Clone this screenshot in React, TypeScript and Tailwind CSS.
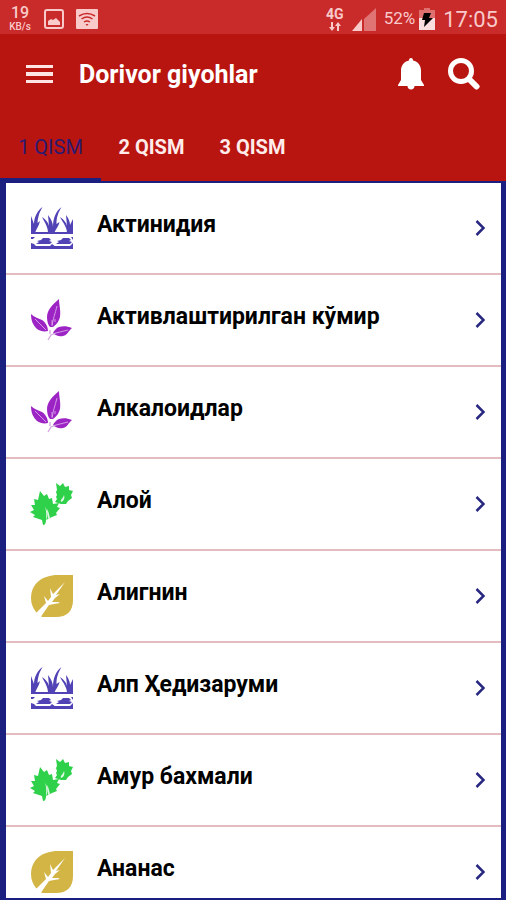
import { useState } from 'react';

type IconName = 'grass' | 'sprig' | 'maple' | 'leaf';

interface Herb {
  id: number;
  name: string;
  icon: IconName;
}

const tabs = ['1 QISM', '2 QISM', '3 QISM'];

const herbs: Herb[] = [
  { id: 1, name: 'Актинидия', icon: 'grass' },
  { id: 2, name: 'Активлаштирилган кўмир', icon: 'sprig' },
  { id: 3, name: 'Алкалоидлар', icon: 'sprig' },
  { id: 4, name: 'Алой', icon: 'maple' },
  { id: 5, name: 'Алигнин', icon: 'leaf' },
  { id: 6, name: 'Алп Ҳедизаруми', icon: 'grass' },
  { id: 7, name: 'Амур бахмали', icon: 'maple' },
  { id: 8, name: 'Ананас', icon: 'leaf' },
];

function GrassIcon() {
  return (
    <svg viewBox="0 0 44 44" className="size-11" fill="#5143b5">
      {/* blades */}
      <path d="M1 27V10l3 8c0-7 4-14 8.500-17C9 7 8 11 7.500 17L10 15c-1 5-4 8-5 12z" />
      <path d="M18 27c0-6-3-10-6-16 4 3 6 5 7 9l-1-11c3 4 5 8 5 12C23 12 26 5 31.500 1c-4 7-5 11-5 17l3-2c-1 5-4 7-5 11z" />
      <path d="M37 27c0-6-4-10-7-16 4 3 6 5 7 9l-1-11c3 4 4 7 4 10l3-6v14z" />
      {/* soil */}
      <path d="M1 26h42v2H1zM1 40h42v3H1z" />
      <path d="M6 38l3-2-2-1 4-1 2-2h6l2 2-2 1 3 1-2 2zM26 38l3-2-2-1 4-1 2-2h6l2 2-2 1 3 1-2 2z" />
      <path d="M1 31h4l-2 2H1zM1 37l3 1 3 3H1zM22 38l4 3h-7zM41 31h2v3zM43 37v4h-4z" />
    </svg>
  );
}

function SprigIcon() {
  return (
    <svg viewBox="0 0 44 44" className="size-11" fill="#9d24c4">
      <path d="M29 1C23 6 17 12 17 19c0 4 1 8 3 10h3c4-3 6-6 7-10 1-7-1-12-1-18z" />
      <path d="M1 16c0 7 2 11 6 15 3 2 7 3 11 2 0-5-3-9-6-11-4-2-8-3-11-6z" />
      <path d="M42 30c-5-2-9-2-13-1-3 1-5 4-6 6 2 2 6 4 10 3 5-1 5-5 9-8z" />
      <path d="M18 42l3-5 5-2M20 32v4" stroke="#d3a6e2" strokeWidth="1.300" fill="none" />
      <path d="M27 8c-2 8-4 13-5 20M5 21l11 11M38 32l-12 3M22 22v5M25 21v3" stroke="#d9a5ea" strokeWidth="0.900" fill="none" />
    </svg>
  );
}

function MapleIcon() {
  return (
    <svg viewBox="0 0 44 44" className="size-11">
      <g fill="#2fd04a">
        <path d="M10 9l4 5 3-2 2 5 3-1 1 6 6-1-2 4 3 1-4 5 1 2-5 2-4 2-2 1c0 3-1 5-3 5l-1-5-9-3 2-2-5-3 4-2-3-5 4 0-1-6 4 1z" />
        <path d="M26 1l4 3 3-3 2 4 4-1v4l4 1-2 4 1 3-4 3-2 3-5 0-6-2 2-3-1-2 1-2-1-3 1-2z" />
      </g>
      <path d="M15 25c3 4 3 8 1 14 0-5 1-8-1-14zM17 27c2 3 2 6 3 9l-2 1zM34 13c1 3 0 6-3 7-1-3 2-3 3-7z" fill="#dff8e2" />
    </svg>
  );
}

function LeafIcon() {
  return (
    <svg viewBox="0 0 44 44" className="size-11">
      <path d="M43 1v25c0 11-6 17-17 17H12L6 38C3 34 1 30 1 24 1 10 12 1 28 1z" fill="#d3b546" />
      <path
        d="M35 8l-9 13 4-1-5 4-3 4 6 0 2 1-6 1-5 1L10 44l-5-4 11-11-2-7 4 5 3-4-1-9 3 6z"
        fill="#fff"
      />
    </svg>
  );
}

const herbIcons = {
  grass: GrassIcon,
  sprig: SprigIcon,
  maple: MapleIcon,
  leaf: LeafIcon,
};

function StatusBar() {
  return (
    <div className="flex h-[34px] shrink-0 items-center justify-between bg-[#c92a2a] px-2 pt-1 text-[#f8caca]">
      <div className="flex items-center gap-3">
        <div className="flex w-6 flex-col items-center font-medium">
          <span className="text-[16px] leading-4">19</span>
          <span className="text-[10px] leading-3">KB/s</span>
        </div>
        <svg viewBox="0 0 20 20" className="size-5">
          <rect x="1" y="1" width="18" height="18" rx="2" fill="none" stroke="currentColor" strokeWidth="2" />
          <path d="M4 16v-4l3-2 2 1 3-2 4 4v3z" fill="currentColor" />
        </svg>
        <svg viewBox="0 0 22 20" className="h-5 w-[22px]">
          <rect width="22" height="20" rx="1" fill="currentColor" />
          <path d="M3 7q8-5 16 0M5.500 10q5.500-4 11 0M8 13q3-2 6 0" fill="none" stroke="#c92a2a" strokeWidth="1.500" />
          <path d="M9.500 15h3L11 17z" fill="#c92a2a" />
        </svg>
      </div>
      <div className="flex items-center">
        <div className="mr-2 flex flex-col items-center">
          <span className="text-[14px] font-bold leading-4">4G</span>
          <svg viewBox="0 0 14 10" className="h-[10px] w-[14px]" fill="currentColor">
            <path d="M3 0h2v5h2L4 9 1 5h2zM9 9h2V4h2l-3-4-3 4h2z" />
          </svg>
        </div>
        <svg viewBox="0 0 24 23" className="mr-2 h-[23px] w-6">
          <path d="M0 23L10 11v12z" fill="currentColor" />
          <path d="M12 23V11L24 0v23z" fill="#e07373" />
        </svg>
        <span className="mr-1 text-[17px]">52%</span>
        <svg viewBox="0 0 16 22" className="mr-2 h-[22px] w-4">
          <path d="M5 0h6v2h5v9H0V2h5z" fill="#df7070" />
          <path d="M0 10h16v12H0z" fill="#fbdede" />
          <path d="M5 5h7l-2 5h4L5 19l1-7H3z" fill="#000" />
        </svg>
        <span className="text-[22px]">17:05</span>
      </div>
    </div>
  );
}

export default function App() {
  const [activeTab, setActiveTab] = useState(0);

  return (
    <div className="flex h-screen flex-col bg-[#b91510] font-['Roboto',sans-serif]">
      <StatusBar />

      <header className="flex h-20 shrink-0 items-center px-[26px] text-white">
        <button aria-label="Menu" className="mr-[26px]">
          <svg viewBox="0 0 27 20" className="h-5 w-[27px]" fill="#ffe4e4">
            <path d="M0 1h27v3H0zM0 8h27v4H0zM0 16h27v3H0z" />
          </svg>
        </button>
        <h1 className="flex-1 pt-[2px] text-[25px] font-bold leading-8">Dorivor giyohlar</h1>
        <button aria-label="Notifications" className="mr-6">
          <svg viewBox="0 0 26 33" className="h-[33px] w-[26px]" fill="currentColor">
            <path d="M13 0c1.500 0 2 1 2 2.500 5 1 8 5 8 10V22l3 5v1H0v-1l3-5v-9.500c0-5 3-9 8-10C11 1 11.500 0 13 0zM9.500 28h7c0 2-1.500 3.500-3.500 3.500S9.500 30 9.500 28z" />
          </svg>
        </button>
        <button aria-label="Search">
          <svg viewBox="0 0 32 32" className="size-8" fill="none" stroke="currentColor">
            <circle cx="13" cy="13" r="10.500" strokeWidth="5" />
            <path d="M21.500 21.500l7 7" strokeWidth="6" strokeLinecap="round" />
          </svg>
        </button>
      </header>

      <nav className="flex h-[67px] shrink-0" role="tablist">
        {tabs.map((tab, i) => (
          <button
            key={tab}
            role="tab"
            aria-selected={activeTab === i}
            onClick={() => setActiveTab(i)}
            className={`w-[101px] border-b-[3px] pt-[2px] text-[20px] ${
              activeTab === i
                ? 'border-[#1a1f80] text-[#2c1a70]'
                : 'border-transparent font-bold text-[#ffeceb]'
            }`}
          >
            {tab}
          </button>
        ))}
      </nav>

      <main className="min-h-0 flex-1 overflow-y-auto border-y-2 border-l-[6px] border-r-[5px] border-[#1a1f80] bg-white [scrollbar-width:none]">
        <ul>
          {herbs.map((herb) => {
            const Icon = herbIcons[herb.icon];
            return (
              <li key={herb.id} className="border-b-2 border-[#e3bcc0]">
                <button className="flex h-[90px] w-full items-center pl-6 pr-4 text-left">
                  <Icon />
                  <span className="flex-1 pb-1.5 pl-[23px] text-[23px] font-bold leading-7 text-black">{herb.name}</span>
                  <svg viewBox="0 0 10 16" className="h-4 w-[10px]" fill="none" stroke="#282882" strokeWidth="2.500">
                    <path d="M1.500 1l7 7-7 7" />
                  </svg>
                </button>
              </li>
            );
          })}
        </ul>
      </main>
    </div>
  );
}
